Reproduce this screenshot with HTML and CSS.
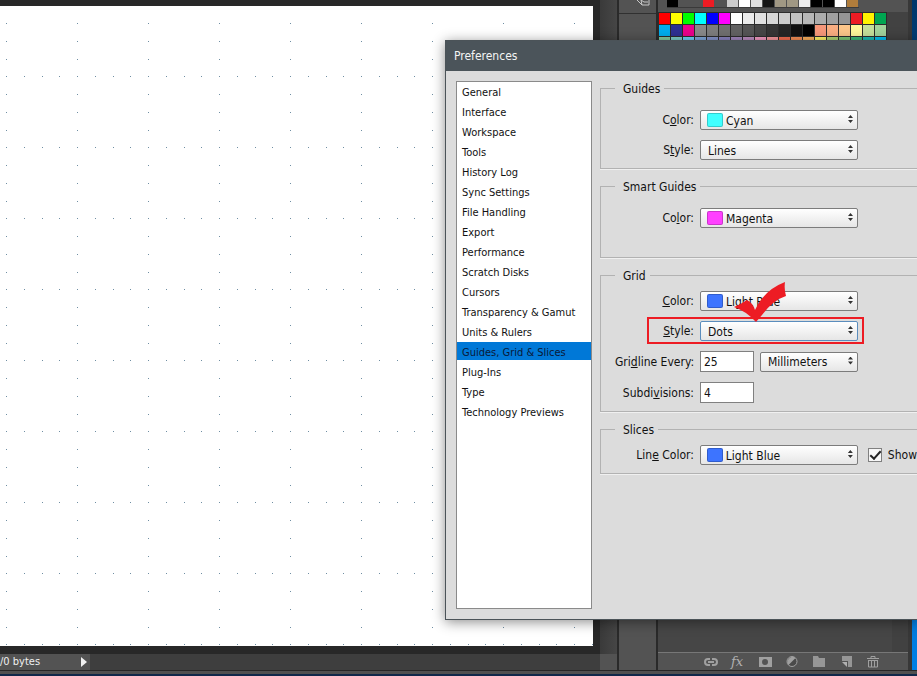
FILE: index.html
```
<!DOCTYPE html>
<html lang="en">
<head>
<meta charset="utf-8">
<title>Preferences</title>
<link rel="stylesheet" href="styles.css">
</head>
<body>
<div class="app">
  <main class="document">
    <div class="stage">
      <svg class="canvas" aria-hidden="true">
        <defs>
          <pattern id="dots" x="6" y="-1" width="71" height="71" patternUnits="userSpaceOnUse">
            <path fill="#6f8ea3" d="M0 0h1v1H0zM18 0h1v1h-1zM36 0h1v1h-1zM53 0h1v1h-1zM0 18h1v1H0zM0 36h1v1H0zM0 54h1v1H0z"/>
          </pattern>
        </defs>
        <rect width="100%" height="100%" fill="#fff"/>
        <rect width="100%" height="100%" fill="url(#dots)"/>
      </svg>
    </div>
    <div class="scrollbar"></div>
    <div class="status">
      <span class="status-text">/0 bytes</span>
      <svg class="status-arrow" width="8" height="10" viewBox="0 0 8 10"><path d="M1 0l6 5-6 5z" fill="#f2f2f2"/></svg>
    </div>
    <div class="corner"></div>
  </main>
  <aside class="dock">
    <div class="dock-top">
      <svg width="16" height="8" viewBox="0 0 16 8" fill="none" stroke="#c8c8c8"><path d="M1 0l5 5h7V0M5 0l1 5M5 0l3 2h4"/></svg>
    </div>
  </aside>
  <aside class="panels">
    <div class="recent" id="recent"></div>
    <div class="swatches" id="swatches"></div>
    <div class="layers"></div>
    <div class="tools">
      <svg width="14" height="14" viewBox="0 0 14 14" fill="none" stroke="#a0a0a0" stroke-width="2"><path d="M6 4H4a3 3 0 0 0 0 6h2M8 4h2a3 3 0 0 1 0 6H8M4 7h6"/></svg>
      <span class="fx">fx</span>
      <svg width="14" height="14" viewBox="0 0 14 14"><path fill="#a0a0a0" fill-rule="evenodd" d="M1 2h13v10H1zM7 4a3 3 0 1 0 0 6 3 3 0 0 0 0-6z"/></svg>
      <svg width="14" height="14" viewBox="0 0 14 14"><circle cx="7" cy="6.500" r="5" fill="#4a4a4a" stroke="#a0a0a0"/><path d="M10.500 3A5 5 0 0 0 3.500 10z" fill="#a0a0a0"/></svg>
      <svg width="14" height="14" viewBox="0 0 14 14"><path fill="#969696" d="M1 1h5l1 2h6v9H1z"/></svg>
      <svg width="14" height="14" viewBox="0 0 14 14"><path fill="#969696" d="M3 1h10v11H9V6H3z"/><path fill="#b0b0b0" d="M3 7h5v5z"/></svg>
      <svg width="14" height="14" viewBox="0 0 14 14" fill="none" stroke="#a0a0a0"><path d="M1 3.500h12M5 3V1.500h4V3M2.500 5v7h9V5M5.500 5v7M8.500 5v7M2 5.500h10"/></svg>
    </div>
  </aside>
  <div class="desktop"></div>
  <div class="frame-bottom"></div>
</div>

<section class="dialog" aria-labelledby="dialog-title">
  <h1 class="dialog-title" id="dialog-title">Preferences</h1>
  <div class="dialog-body">
    <nav class="categories">
      <button>General</button>
      <button>Interface</button>
      <button>Workspace</button>
      <button>Tools</button>
      <button>History Log</button>
      <button>Sync Settings</button>
      <button>File Handling</button>
      <button>Export</button>
      <button>Performance</button>
      <button>Scratch Disks</button>
      <button>Cursors</button>
      <button>Transparency &amp; Gamut</button>
      <button>Units &amp; Rulers</button>
      <button class="selected">Guides, Grid &amp; Slices</button>
      <button>Plug-Ins</button>
      <button>Type</button>
      <button>Technology Previews</button>
    </nav>
    <form class="settings">
      <fieldset class="group group-guides">
        <legend>Guides</legend>
        <div class="row">
          <label for="guide-color">C<u>o</u>lor:</label>
          <span class="picker swatched cyan"><select id="guide-color"><option>Cyan</option></select></span>
        </div>
        <div class="row">
          <label for="guide-style">S<u>t</u>yle:</label>
          <span class="picker"><select id="guide-style"><option>Lines</option></select></span>
        </div>
      </fieldset>
      <fieldset class="group group-smart">
        <legend>Smart Guides</legend>
        <div class="row">
          <label for="smart-color">Co<u>l</u>or:</label>
          <span class="picker swatched magenta"><select id="smart-color"><option>Magenta</option></select></span>
        </div>
      </fieldset>
      <fieldset class="group">
        <legend>Grid</legend>
        <div class="row">
          <label for="grid-color"><u>C</u>olor:</label>
          <span class="picker swatched blue"><select id="grid-color"><option>Light Blue</option></select></span>
        </div>
        <div class="row marked">
          <label for="grid-style"><u>S</u>tyle:</label>
          <span class="picker focused"><select id="grid-style"><option>Dots</option></select></span>
          <span class="mark-box"></span>
          <svg class="mark-check" width="54" height="42" viewBox="0 0 54 42"><path fill="#ed1c24" d="M2 26Q9 23 15 19Q21 22 23 29Q32 9 53 1Q52 8 54 15Q41 19 30 34L24 41Q14 30 2 26z"/></svg>
        </div>
        <div class="row">
          <label for="gridline">Gri<u>d</u>line Every:</label>
          <input class="number" id="gridline" type="text" value="25">
          <span class="picker unit"><select aria-label="Unit"><option>Millimeters</option></select></span>
        </div>
        <div class="row">
          <label for="subdivisions">Subdi<u>v</u>isions:</label>
          <input class="number" id="subdivisions" type="text" value="4">
        </div>
      </fieldset>
      <fieldset class="group">
        <legend>Slices</legend>
        <div class="row">
          <label for="line-color">Lin<u>e</u> Color:</label>
          <span class="picker swatched blue"><select id="line-color"><option>Light Blue</option></select></span>
          <input class="check" type="checkbox" id="show" checked>
          <label class="check-label" for="show">Show</label>
        </div>
      </fieldset>
    </form>
  </div>
</section>
<script src="swatches.js"></script>
</body>
</html>
```
FILE: swatches.js
```
const recent = ["#000", "", "", "#ed1c24", "", "#cdcdcd", "#fff", "#e1e1e1", "#141414", "#a09884", "#a09884", "#ececec", "#000", "#000", "#fff", "#b07d3c"];
const swatches = [
  "#f00", "#ff0", "#0f0", "#0ff", "#00f", "#f0f", "#fff", "#ebebeb", "#e1e1e1", "#d7d7d7", "#cccccc", "#c2c2c2", "#b7b7b7", "#acacac", "#a0a0a0", "#959595", "#ed1c24", "#fff200", "#00a651",
  "#00aeef", "#2e3192", "#ec008c", "#898989", "#7d7d7d", "#707070", "#626262", "#555", "#464646", "#363636", "#262626", "#111", "#000", "#f7977a", "#f9ad81", "#fdc68a", "#fff79a", "#c4df9b", "#a2d39c",
  "#82ca9d", "#7bcdc8", "#6ecff6", "#7ea7d8", "#8493ca", "#8882be", "#a187be", "#bc8dbf", "#f49ac2", "#f6989d", "#f26c4f", "#f68e55", "#fbaf5c", "#fff467", "#acd372", "#7cc576", "#3bb878", "#1abbb4", "#00bff3"
];

function fill(id, colors) {
  const host = document.getElementById(id);
  for (const color of colors) {
    const cell = document.createElement("i");
    if (color) cell.style.background = color;
    else cell.className = "empty";
    host.append(cell);
  }
}

fill("recent", recent);
fill("swatches", swatches);
```
FILE: styles.css
```
*, *::before, *::after { box-sizing: border-box; }

body {
  margin: 0;
  height: 100vh;
  overflow: hidden;
  position: relative;
  font: 12px/16px "DejaVu Sans Condensed", "Noto Sans", sans-serif;
  color: #111;
}

.app {
  height: 100%;
  display: grid;
  grid-template-columns: 1fr 41px 254px 5px;
  grid-template-rows: 1fr 6px;
  background: #282828;
}

.document {
  display: grid;
  grid-template-columns: 1fr 17px;
  grid-template-rows: 1fr 16px;
}

.stage {
  display: flex;
  padding: 6px 7px 8px 0;
  background: #282828;
}

.canvas { flex: 1; height: 100%; }

.scrollbar { background: linear-gradient(90deg, #3a3a3a, #464646); }

.status {
  display: flex;
  align-items: center;
  background: linear-gradient(90deg, #535353 90px, #3e3e3e 90px);
  color: #f0f0f0;
  font-size: 11px;
}

.status-text { width: 80px; }

.corner { background: #535353; }

.dock {
  border: solid #2a2a2a;
  border-width: 0 2px;
  background: #535353;
}

.dock-top {
  height: 14px;
  padding-left: 17px;
  border-bottom: 1px solid #303030;
}

.dock-top svg { display: block; }

.panels {
  display: flex;
  flex-direction: column;
  border-right: 4px solid #383838;
  background: #535353;
}

.recent {
  display: flex;
  gap: 1px;
  width: 192px;
  height: 8px;
  margin: 0 0 4px 9px;
  border-bottom: 1px solid #3a3a3a;
}

.recent i { width: 11px; height: 7px; }

.swatches {
  display: grid;
  grid-template-columns: repeat(19, 11px);
  grid-auto-rows: 11px;
  gap: 1px;
  padding: 1px 0 0 1px;
  background: linear-gradient(90deg, #2c2c2c 229px, #424242 229px);
}

.layers {
  flex: 1;
  border-right: 16px solid #414141;
  background: #464646;
}

.tools {
  display: flex;
  justify-content: flex-end;
  align-items: center;
  gap: 13px;
  height: 18px;
  padding-right: 28px;
  border-top: 1px solid #777;
}

.fx {
  width: 14px;
  color: #b0b0b0;
  font: italic 13px/16px "DejaVu Serif", serif;
}

.desktop { background: linear-gradient(#00376b, #0080e6); }

.frame-bottom {
  grid-column: 1 / -1;
  border-top: 1px solid #262626;
  background: linear-gradient(#505050 3px, #10284a 3px);
}

.dialog {
  position: absolute;
  inset: 40px 0 56px 445px;
  display: flex;
  flex-direction: column;
  border: solid #4b5358;
  border-width: 1px 0 1px 1px;
  background: #dcdcdc;
  box-shadow: 0 2px 12px rgba(0, 0, 0, 0.45);
}

.dialog-title {
  margin: 0;
  padding: 7px 8px;
  background: #4b545a;
  color: #f4f4f4;
  font-size: 12px;
  font-weight: normal;
}

.dialog-body {
  flex: 1;
  display: flex;
  gap: 8px;
  padding: 9px 0 10px 10px;
}

.categories {
  width: 136px;
  margin-top: 1px;
  display: flex;
  flex-direction: column;
  gap: 2px;
  border: 1px solid #8a8a8a;
  background: #fff;
}

.categories button {
  height: 18px;
  padding: 3px 5px 0;
  border: 0;
  background: none;
  color: #111;
  font: inherit;
  font-size: 11px;
  line-height: 15px;
  text-align: left;
  white-space: nowrap;
}

.categories .selected { background: #0078d7; color: #0a1838; }

.settings {
  flex: 1;
  min-width: 0;
  display: flex;
  flex-direction: column;
  gap: 9px;
}

.group {
  min-width: 0;
  margin: 0;
  padding: 8px 0 8px 14px;
  border: 1px solid #b2b2b2;
  border-right: 0;
  box-shadow: 0 1px #f0f0f0;
}

.group-guides { padding-top: 14px; }
.group-smart { padding-top: 14px; padding-bottom: 29px; }

.group legend { height: 16px; padding: 0 4px 0 8px; line-height: 18px; }

.row {
  display: flex;
  align-items: center;
  gap: 6px;
}

.row + .row { margin-top: 10px; }

.row label { width: 79px; text-align: right; white-space: nowrap; line-height: 18px; }

.row .check-label { width: auto; text-align: left; }

.picker {
  position: relative;
  flex: none;
  width: 158px;
  height: 20px;
}

.picker select {
  width: 100%;
  height: 100%;
  padding: 1px 7px 0;
  appearance: none;
  border: 1px solid #7c7c7c;
  border-radius: 2px;
  background: linear-gradient(#fff, #e6e6e6);
  color: #111;
  font: inherit;
}

.swatched select { padding-left: 25px; }

.picker::after {
  content: "";
  position: absolute;
  top: 5px;
  right: 5px;
  width: 5px;
  height: 8px;
  background: #333;
  clip-path: polygon(50% 0, 100% 38%, 0 38%, 0 62%, 100% 62%, 50% 100%, 0 62%, 0 38%);
  pointer-events: none;
}

.swatched::before {
  content: "";
  position: absolute;
  top: 3px;
  left: 7px;
  width: 16px;
  height: 14px;
  border: 1px solid rgba(0, 0, 0, 0.2);
  border-radius: 2px;
  pointer-events: none;
}

.cyan::before { background-color: #40ffff; }
.magenta::before { background-color: #ff40ff; }
.blue::before { background-color: #3d74ff; }

.focused select { border-color: #5b8dbd; }

.unit { width: 98px; }

.number {
  width: 54px;
  height: 21px;
  padding: 0 3px;
  border: 1px solid #808080;
  background: #fff;
  color: #111;
  font: inherit;
}

.check {
  appearance: none;
  flex: none;
  width: 14px;
  height: 14px;
  margin: 0 0 0 4px;
  border: 1px solid #808080;
  background: #f6f6f6;
}

.check:checked::before {
  content: "";
  display: block;
  width: 11px;
  height: 6px;
  margin: 2px 0 0 1px;
  border: solid #222;
  border-width: 0 0 2px 2px;
  transform: rotate(-48deg);
}

.marked { position: relative; }

.mark-box {
  position: absolute;
  top: -4px;
  left: 32px;
  width: 217px;
  height: 27px;
  border: 2px solid #ed1c24;
  pointer-events: none;
}

.mark-check {
  position: absolute;
  top: -40px;
  left: 117px;
  z-index: 1;
  pointer-events: none;
}
```
